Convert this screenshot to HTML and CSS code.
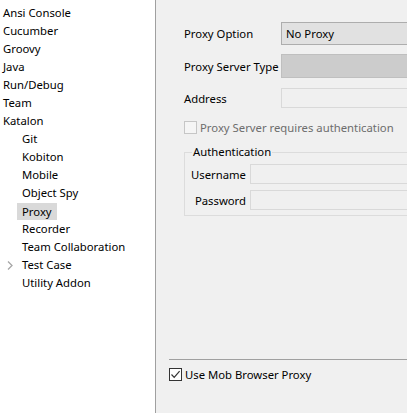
FILE: index.html
```html
<!DOCTYPE html>
<html>
<head>
<meta charset="utf-8">
<link rel="stylesheet" href="styles.css">
</head>
<body>
<div class="app">
  <div class="tree">
    <div class="item">Ansi Console</div>
    <div class="item">Cucumber</div>
    <div class="item">Groovy</div>
    <div class="item">Java</div>
    <div class="item">Run/Debug</div>
    <div class="item">Team</div>
    <div class="item">Katalon</div>
    <div class="item child">Git</div>
    <div class="item child">Kobiton</div>
    <div class="item child">Mobile</div>
    <div class="item child">Object Spy</div>
    <div class="item child"><span class="sel">Proxy</span></div>
    <div class="item child">Recorder</div>
    <div class="item child">Team Collaboration</div>
    <div class="item child has-arrow"><svg class="arrow" width="6" height="9" viewBox="0 0 6 9"><polyline points="1,0.5 5,4.5 1,8.5" fill="none" stroke="#a6a6a6" stroke-width="1.3"/></svg>Test Case</div>
    <div class="item child">Utility Addon</div>
  </div>
  <div class="right">
    <div class="form">
      <div class="row r1">
        <div class="label">Proxy Option</div>
        <div class="combo">No Proxy</div>
      </div>
      <div class="row r2">
        <div class="label">Proxy Server Type</div>
        <div class="combo disabled"></div>
      </div>
      <div class="row r3">
        <div class="label">Address</div>
        <div class="field"></div>
      </div>
      <div class="check-row">
        <span class="cb"></span><span class="dis">Proxy Server requires authentication</span>
      </div>
      <fieldset class="group">
        <legend>Authentication</legend>
        <div class="grow g1">
          <div class="glabel">Username</div>
          <div class="field"></div>
        </div>
        <div class="grow g2">
          <div class="glabel">Password</div>
          <div class="field"></div>
        </div>
      </fieldset>
    </div>
    <div class="footer">
      <div class="sep"></div>
      <div class="mob">
        <span class="cb checked"><svg width="11" height="11" viewBox="0 0 11 11"><polyline points="1.5,5.5 4.2,8.3 9.6,2.2" fill="none" stroke="#333" stroke-width="1.2"/></svg></span><span>Use Mob Browser Proxy</span>
      </div>
    </div>
  </div>
</div>
</body>
</html>
```
FILE: styles.css
```css
html, body {
  margin: 0;
  padding: 0;
}
body {
  font-family: "Noto Sans", "Open Sans", sans-serif;
  font-size: 11.3px;
  color: #000;
  width: 407px;
  height: 413px;
  overflow: hidden;
}
.app {
  display: flex;
  height: 413px;
}
.tree {
  width: 155px;
  flex: none;
  background: #fff;
  border-right: 1px solid #a0a0a0;
  padding-top: 4px;
  box-sizing: content-box;
}
.item {
  height: 18px;
  line-height: 18px;
  padding-left: 3px;
  white-space: nowrap;
  display: flex;
  align-items: center;
}
.item.child {
  padding-left: 22px;
}
.item.has-arrow {
  padding-left: 7px;
}
.arrow {
  margin-right: 9px;
  flex: none;
}
.sel {
  background: #d9d9d9;
  margin-left: -5px;
  padding: 0 5px;
  height: 17px;
  line-height: 17px;
}
.right {
  flex: 1;
  background: #f0f0f0;
  display: flex;
  flex-direction: column;
  overflow: hidden;
  min-width: 0;
}
.form {
  padding: 22px 0 0 28px;
  margin-right: -40px;
}
.row {
  display: flex;
  align-items: center;
}
.label {
  width: 97px;
  flex: none;
  white-space: nowrap;
}
.combo {
  flex: 1;
  height: 23px;
  box-sizing: border-box;
  border: 1px solid #adadad;
  background: #e1e1e1;
  padding-left: 4px;
  line-height: 21px;
}
.combo.disabled {
  height: 24px;
  border-color: #bfbfbf;
  background: #cccccc;
}
.r2 {
  margin-top: 9px;
}
.r3 {
  margin-top: 10px;
}
.field {
  flex: 1;
  height: 20px;
  box-sizing: border-box;
  border: 1px solid #d9d9d9;
  background: #f0f0f0;
}
.check-row {
  margin-top: 12px;
  height: 14px;
  display: flex;
  align-items: center;
}
.cb {
  width: 13px;
  height: 13px;
  box-sizing: border-box;
  border: 1px solid #c6c6c6;
  background: #f5f5f5;
  flex: none;
  margin-right: 3px;
  display: inline-flex;
  align-items: center;
  justify-content: center;
}
.dis {
  color: #6d6d6d;
  white-space: nowrap;
}
.group {
  margin: 10px 0 0 0;
  padding: 0 0 5px 0;
  border: 1px solid #dcdcdc;
  min-width: 0;
}
.group legend {
  margin-left: 7px;
  padding: 0 1px;
  line-height: 16px;
}
.grow {
  display: flex;
  align-items: center;
}
.g1 {
  margin-top: 4px;
}
.g2 {
  margin-top: 6px;
}
.glabel {
  width: 61px;
  text-align: right;
  padding-right: 4px;
  flex: none;
}
.footer {
  margin-top: auto;
  padding: 0 0 32px 13px;
}
.sep {
  height: 1px;
  background: #a0a0a0;
  margin-bottom: 7px;
}
.mob {
  display: flex;
  align-items: center;
  height: 14px;
  white-space: nowrap;
}
.cb.checked {
  border-color: #333;
  background: #fff;
}
```
